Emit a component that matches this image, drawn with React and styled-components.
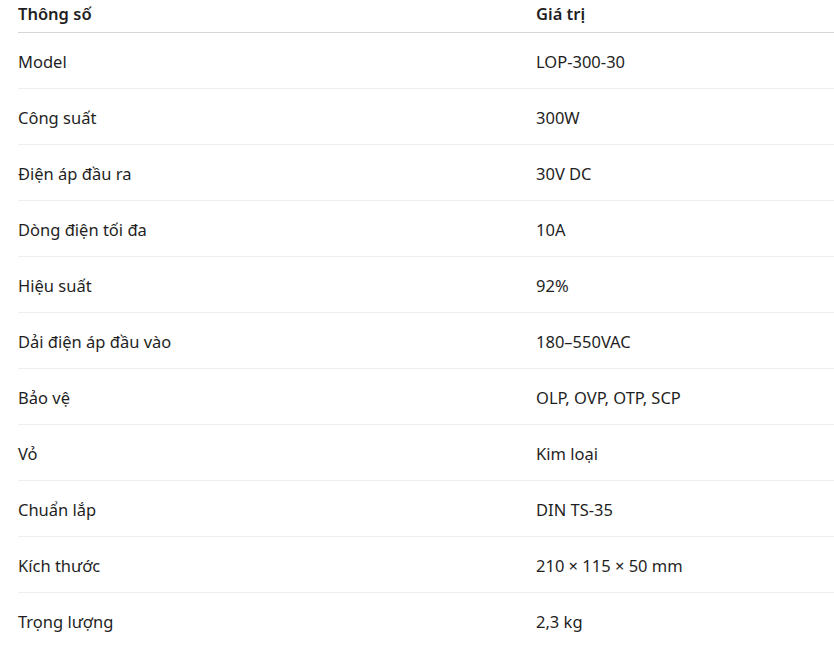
import styled, { createGlobalStyle } from 'styled-components';

const specs = [
  ['Model', 'LOP-300-30'],
  ['Công suất', '300W'],
  ['Điện áp đầu ra', '30V DC'],
  ['Dòng điện tối đa', '10A'],
  ['Hiệu suất', '92%'],
  ['Dải điện áp đầu vào', '180–550VAC'],
  ['Bảo vệ', 'OLP, OVP, OTP, SCP'],
  ['Vỏ', 'Kim loại'],
  ['Chuẩn lắp', 'DIN TS-35'],
  ['Kích thước', '210 × 115 × 50 mm'],
  ['Trọng lượng', '2,3 kg'],
];

const App = () => {
  return (
    <>
      <GlobalStyle />
      <Wrap>
        <Table>
          <thead>
            <tr>
              <HeadCell>Thông số</HeadCell>
              <HeadCell>Giá trị</HeadCell>
            </tr>
          </thead>
          <tbody>
            {specs.map(([name, value]) => (
              <Row key={name}>
                <Cell>{name}</Cell>
                <Cell>{value}</Cell>
              </Row>
            ))}
          </tbody>
        </Table>
      </Wrap>
    </>
  );
};

const GlobalStyle = createGlobalStyle`
  body {
    margin: 0;
    background: #ffffff;
    font-family: 'Segoe UI', 'Noto Sans', sans-serif;
    color: #1f1f1f;
    overflow: hidden;
  }
`;

const Wrap = styled.div`
  padding-left: 18px;
  width: 834px;
  box-sizing: border-box;
`;

const Table = styled.table`
  width: 100%;
  border-collapse: collapse;
  font-size: 16.5px;
  line-height: 24px;
`;

const HeadCell = styled.th`
  text-align: left;
  font-weight: 600;
  padding: 2px 0 6px;
  border-bottom: 1px solid #d6d6d6;
  &:first-child {
    width: 518px;
  }
`;

const Row = styled.tr`
  border-bottom: 1px solid #eeeeee;
  &:last-child {
    border-bottom: none;
  }
`;

const Cell = styled.td`
  padding: 17px 0 14px;
  height: 24px;
`;

export default App;
